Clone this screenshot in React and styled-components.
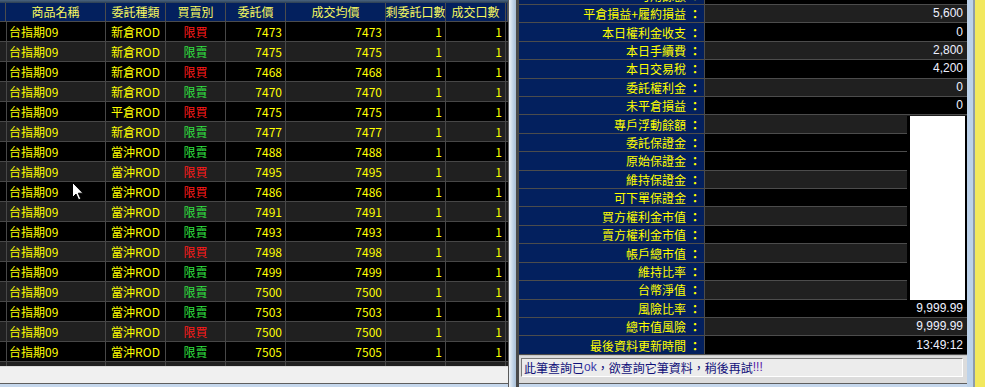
import React from "react";
import styled, { createGlobalStyle } from "styled-components";

// 期貨委託回報 + 權益數 畫面

const GlobalStyle = createGlobalStyle`
  html, body {
    margin: 0;
    padding: 0;
    background: #c5d7ec;
  }
  body {
    font-family: "Noto Sans CJK TC", "Liberation Sans", sans-serif;
  }
`;

const COLS = "6px 100px 60px 60px 60px 100px 60px 60px 2px";

const orders = [
    ["新倉ROD", "buy", 7473],
    ["新倉ROD", "sell", 7475],
    ["新倉ROD", "buy", 7468],
    ["新倉ROD", "sell", 7470],
    ["平倉ROD", "buy", 7475],
    ["新倉ROD", "sell", 7477],
    ["當沖ROD", "sell", 7488],
    ["當沖ROD", "buy", 7495],
    ["當沖ROD", "buy", 7486],
    ["當沖ROD", "sell", 7491],
    ["當沖ROD", "sell", 7493],
    ["當沖ROD", "buy", 7498],
    ["當沖ROD", "sell", 7499],
    ["當沖ROD", "sell", 7500],
    ["當沖ROD", "sell", 7503],
    ["當沖ROD", "buy", 7500],
    ["當沖ROD", "sell", 7505],
];

const summary = [
    ["可用餘額", "0", false],
    ["平倉損益+履約損益", "5,600", true],
    ["本日權利金收支", "0", false],
    ["本日手續費", "2,800", true],
    ["本日交易稅", "4,200", false],
    ["委託權利金", "0", true],
    ["未平倉損益", "0", false],
    ["專戶浮動餘額", "", true],
    ["委託保證金", "", false],
    ["原始保證金", "", false],
    ["維持保證金", "", true],
    ["可下單保證金", "", false],
    ["買方權利金市值", "", true],
    ["賣方權利金市值", "", false],
    ["帳戶總市值", "", true],
    ["維持比率", "", false],
    ["台幣淨值", "", true],
    ["風險比率", "9,999.99", false],
    ["總市值風險", "9,999.99", true],
    ["最後資料更新時間", "13:49:12", false],
];

const App = () => {
    return (
        <>
            <GlobalStyle />
            <Screen>
                <LeftPanel>
                    <TopStrip />
                    <HeaderRow>
                        <HeadCell />
                        <HeadCell>商品名稱</HeadCell>
                        <HeadCell>委託種類</HeadCell>
                        <HeadCell>買賣別</HeadCell>
                        <HeadCell>委託價</HeadCell>
                        <HeadCell>成交均價</HeadCell>
                        <HeadCell>剩委託口數</HeadCell>
                        <HeadCell>成交口數</HeadCell>
                        <HeadCell />
                    </HeaderRow>
                    <Body>
                        {orders.map(([type, side, price], i) => (
                            <Row key={i} odd={i % 2 === 1}>
                                <Cell />
                                <Cell align="left">台指期09</Cell>
                                <Cell align="center">{type}</Cell>
                                <Cell align="center" side={side}>
                                    {side === "buy" ? "限買" : "限賣"}
                                </Cell>
                                <Cell align="right">{price}</Cell>
                                <Cell align="right">{price}</Cell>
                                <Cell align="right">1</Cell>
                                <Cell align="right">1</Cell>
                                <Cell />
                            </Row>
                        ))}
                        {/* 下一筆只露出上緣 */}
                        <Row odd>
                            {Array.from({ length: 9 }).map((_, i) => (
                                <Cell key={i} />
                            ))}
                        </Row>
                        <Cursor width="12" height="19" viewBox="0 0 12 19">
                            <path
                                d="M0.5 0.5 L0.5 15.5 L4 12 L6.6 17.8 L8.8 16.8 L6.3 11.2 L11 11.2 Z"
                                fill="#fff"
                                stroke="#000"
                                strokeWidth="1"
                            />
                        </Cursor>
                    </Body>
                    <HScroll />
                </LeftPanel>

                <Splitter />

                <RightPanel>
                    <DataArea>
                        <SummaryList>
                            {summary.map(([label, value, gray], i) => (
                                <SummaryRow key={i}>
                                    <Label>
                                        {label}
                                        <Colon>：</Colon>
                                    </Label>
                                    <Value gray={gray}>{value}</Value>
                                </SummaryRow>
                            ))}
                        </SummaryList>
                        <BlankBox />
                    </DataArea>
                    <StatusBar>
                        <StatusText>
                            此筆查詢已<Ok>ok</Ok>，欲查詢它筆資料，稍後再試<Bang>!!!</Bang>
                        </StatusText>
                    </StatusBar>
                </RightPanel>

                <EdgeStrip />
                <YellowStrip />
            </Screen>
        </>
    );
};

export default App;

const Screen = styled.div`
    width: 985px;
    height: 387px;
    display: flex;
    overflow: hidden;
    background: #c5d7ec;
`;

const LeftPanel = styled.div`
    width: 508px;
    height: 383px;
    display: flex;
    flex-direction: column;
    border-bottom: 1px solid #5e5e5e;
    background: #000;
`;

const TopStrip = styled.div`
    height: 3px;
    background: linear-gradient(#4a6480, #2c3e52);
`;

const HeaderRow = styled.div`
    height: 19px;
    display: grid;
    grid-template-columns: ${COLS};
    background: #03205e;
`;

const HeadCell = styled.div`
    box-sizing: border-box;
    border-right: 1px solid #4c4c4c;
    border-bottom: 1px solid #4c4c4c;
    display: flex;
    align-items: center;
    justify-content: center;
    overflow: hidden;
    white-space: nowrap;
    color: #f8f860;
    font-size: 12px;
    line-height: 18px;
`;

const Body = styled.div`
    position: relative;
    height: 344px;
    overflow: hidden;
`;

const Row = styled.div`
    height: 20px;
    flex-shrink: 0;
    display: grid;
    grid-template-columns: ${COLS};
    background: ${(props) => (props.odd ? "#202020" : "#000")};
`;

const Cell = styled.div`
    box-sizing: border-box;
    border-right: 1px solid #474747;
    border-bottom: 1px solid #474747;
    padding: 0 3px 0 3px;
    display: flex;
    align-items: center;
    justify-content: ${(props) =>
        props.align === "left"
            ? "flex-start"
            : props.align === "center"
            ? "center"
            : "flex-end"};
    overflow: hidden;
    white-space: nowrap;
    font-size: 12px;
    line-height: 19px;
    color: ${(props) =>
        props.side === "buy"
            ? "#ff1a1a"
            : props.side === "sell"
            ? "#30e040"
            : "#ffff00"};
`;

const Cursor = styled.svg`
    position: absolute;
    left: 72px;
    top: 160px;
`;

const HScroll = styled.div`
    height: 17px;
    background: #f0f0f0;
    border-top: 1px solid #dcdcdc;
    box-sizing: border-box;
`;

const Splitter = styled.div`
    width: 11px;
    height: 387px;
    box-sizing: border-box;
    border-left: 1px solid #5a5a5a;
    border-right: 3px solid #4a4a4a;
    background: linear-gradient(to right, #eef3f8, #bfd2e6 60%, #aabfd6);
`;

const RightPanel = styled.div`
    width: 448px;
    height: 383px;
    display: flex;
    flex-direction: column;
    border-bottom: 1px solid #5e5e5e;
    background: #dcdcdc;
`;

const DataArea = styled.div`
    position: relative;
    height: 355px;
    overflow: hidden;
    background: #000;
`;

const SummaryList = styled.div`
    margin-top: -13.4px;
    display: flex;
    flex-direction: column;
`;

const SummaryRow = styled.div`
    height: 18.42px;
    display: grid;
    grid-template-columns: 186px 262px;
`;

const Label = styled.div`
    box-sizing: border-box;
    background: #03205e;
    border-right: 1px solid #4c4c4c;
    border-bottom: 1px solid #4c4c4c;
    display: flex;
    align-items: center;
    justify-content: flex-end;
    padding-right: 3px;
    white-space: nowrap;
    color: #ffff00;
    font-size: 12px;
    line-height: 17px;
`;

const Colon = styled.span`
    width: 12px;
    margin-left: 3px;
    text-align: center;
    font-weight: bold;
`;

const Value = styled.div`
    box-sizing: border-box;
    background: ${(props) => (props.gray ? "#202020" : "#000")};
    border-bottom: 1px solid #4c4c4c;
    display: flex;
    align-items: center;
    justify-content: flex-end;
    padding-right: 4px;
    font-family: "Liberation Sans", Arial, sans-serif;
    font-size: 12px;
    line-height: 17px;
    color: #eef0ff;
`;

const BlankBox = styled.div`
    position: absolute;
    left: 388px;
    top: 116px;
    width: 60px;
    height: 184px;
    box-sizing: border-box;
    background: #fff;
    border-left: 3px solid #000;
    border-right: 2px solid #000;
`;

const StatusBar = styled.div`
    flex: 1;
    padding: 2px 4px 6px 2px;
    border-top: 1px solid #c8c8c8;
    box-sizing: border-box;
    display: flex;
`;

const StatusText = styled.div`
    flex: 1;
    box-sizing: border-box;
    height: 19px;
    border-top: 1px solid #7a7a7a;
    border-left: 1px solid #7a7a7a;
    border-bottom: 1px solid #fff;
    border-right: 1px solid #fff;
    background: #ececec;
    padding-left: 2px;
    display: flex;
    align-items: center;
    white-space: nowrap;
    overflow: hidden;
    color: #10107a;
    font-size: 12px;
    line-height: 17px;
`;

const Ok = styled.span`
    color: #3838a8;
    font-family: "Liberation Sans", Arial, sans-serif;
`;

const Bang = styled.span`
    color: #5a1aa8;
    font-family: "Liberation Sans", Arial, sans-serif;
`;

const EdgeStrip = styled.div`
    width: 8px;
    height: 387px;
    box-sizing: border-box;
    background: #bcd2ea;
    border-right: 2px solid #8e9cab;
`;

const YellowStrip = styled.div`
    width: 10px;
    height: 387px;
    background: #f2e85e;
`;
